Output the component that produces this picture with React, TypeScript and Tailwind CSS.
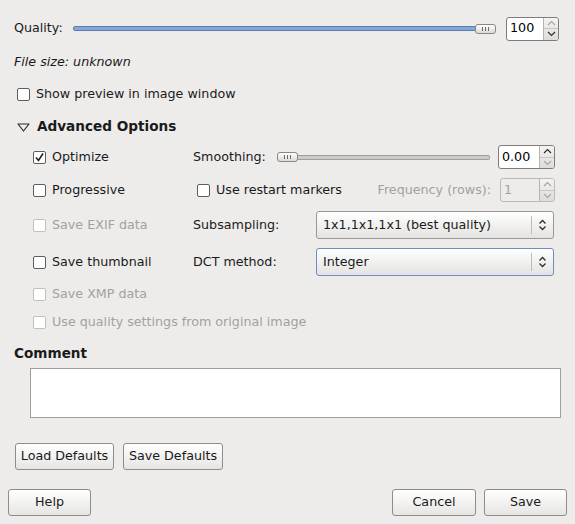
const font = { fontFamily: '"DejaVu Sans", "Liberation Sans", sans-serif' };

const Check = ({ checked = false, disabled = false }: { checked?: boolean; disabled?: boolean }) => (
  <span
    className={`flex h-[13px] w-[13px] items-center justify-center rounded-[2px] border bg-white ${
      disabled ? "border-[#c2c0bd] bg-[#efeeed]" : "border-[#5e5e5e]"
    }`}
  >
    {checked && (
      <svg width="11" height="11" viewBox="0 0 11 11">
        <path d="M2 5.5 L4.5 8.5 L9 1.5" fill="none" stroke="#222" strokeWidth="1.6" />
      </svg>
    )}
  </span>
);

const CheckRow = ({
  label,
  checked,
  disabled,
}: {
  label: string;
  checked?: boolean;
  disabled?: boolean;
}) => (
  <div className="flex items-center gap-[6px]">
    <Check checked={checked} disabled={disabled} />
    <span className={disabled ? "text-[#a3a19e]" : "text-[#1a1a1a]"}>{label}</span>
  </div>
);

const Thumb = () => (
  <div className="flex h-[10px] w-[21px] shrink-0 items-center justify-center gap-[2px] rounded-[3px] border border-[#8a8886] bg-gradient-to-b from-white to-[#dcdad7]">
    <span className="h-[4px] w-px bg-[#6d6b68]" />
    <span className="h-[4px] w-px bg-[#6d6b68]" />
    <span className="h-[4px] w-px bg-[#6d6b68]" />
  </div>
);

const Arrows = ({ upDim, downDim }: { upDim?: boolean; downDim?: boolean }) => (
  <div className="flex w-[15px] flex-col border-l border-[#b5b3b0] bg-gradient-to-b from-[#f4f3f2] to-[#dedcda]">
    <div className="flex flex-1 items-center justify-center border-b border-[#c9c7c4]">
      <svg width="9" height="6" viewBox="0 0 9 6">
        <path d="M1 5 L4.5 1.5 L8 5" fill="none" stroke={upDim ? "#a8a6a3" : "#2e2e2e"} strokeWidth="1.2" />
      </svg>
    </div>
    <div className="flex flex-1 items-center justify-center">
      <svg width="9" height="6" viewBox="0 0 9 6">
        <path d="M1 1 L4.5 4.5 L8 1" fill="none" stroke={downDim ? "#a8a6a3" : "#2e2e2e"} strokeWidth="1.2" />
      </svg>
    </div>
  </div>
);

const Spin = ({
  value,
  w,
  disabled,
  upDim,
  downDim,
}: {
  value: string;
  w: string;
  disabled?: boolean;
  upDim?: boolean;
  downDim?: boolean;
}) => (
  <div
    className={`flex h-[24px] ${w} shrink-0 overflow-hidden rounded-[3px] border ${
      disabled ? "border-[#bcbab7] bg-[#edeceb]" : "border-[#7f7d7a] bg-white"
    }`}
  >
    <div className={`flex flex-1 items-center pl-[3px] ${disabled ? "text-[#a3a19e]" : "text-black"}`}>{value}</div>
    <Arrows upDim={upDim || disabled} downDim={downDim || disabled} />
  </div>
);

const Combo = ({ value, focused }: { value: string; focused?: boolean }) => (
  <div
    className={`flex h-[28px] w-[238px] items-center rounded-[3px] border bg-gradient-to-b from-white to-[#e4e3e1] ${
      focused ? "border-[#6b8fc2]" : "border-[#9a9895]"
    }`}
  >
    <span className="flex-1 pl-[6px] text-[#1a1a1a]">{value}</span>
    <span className="h-[18px] w-px bg-[#bdbbb8]" />
    <span className="flex w-[21px] justify-center">
      <svg width="9" height="12" viewBox="0 0 9 12">
        <path d="M1.5 4.5 L4.5 1.5 L7.5 4.5 M1.5 7.5 L4.5 10.5 L7.5 7.5" fill="none" stroke="#2e2e2e" strokeWidth="1.3" />
      </svg>
    </span>
  </div>
);

const Button = ({ label, w }: { label: string; w: string }) => (
  <button className={`flex h-[27px] ${w} items-center justify-center rounded-[3px] border border-[#8f8d8a] bg-gradient-to-b from-white to-[#e6e5e3] text-[#1a1a1a]`}>
    {label}
  </button>
);

export default function App() {
  return (
    <div className="flex h-[524px] w-[575px] flex-col bg-[#edeceb] text-[12.7px] leading-none text-[#1a1a1a]" style={font}>
      {/* quality */}
      <div className="mt-[16px] flex h-[25px] items-center pl-[14px] pr-[16px]">
        <span className="w-[59px]">Quality:</span>
        <div className="flex flex-1 items-center">
          <div className="h-[5px] flex-1 rounded-[2px] border border-[#5a7fb5] bg-[#86a7d6]" />
          <div className="-ml-[20px]">
            <Thumb />
          </div>
        </div>
        <div className="ml-[10px]">
          <Spin value="100" w="w-[53px]" upDim />
        </div>
      </div>

      <div className="mt-[10px] flex h-[22px] items-center pl-[14px] italic">File size: unknown</div>

      <div className="mt-[10px] flex h-[22px] items-center pl-[17px]">
        <CheckRow label="Show preview in image window" />
      </div>

      {/* advanced expander */}
      <div className="mt-[11px] flex h-[22px] items-center gap-[7px] pl-[17px]">
        <svg width="13" height="9" viewBox="0 0 13 9">
          <path d="M1 1 L12 1 L6.5 8 Z" fill="none" stroke="#2a2a2a" strokeWidth="1.2" strokeLinejoin="round" />
        </svg>
        <span className="text-[13.6px] font-bold">Advanced Options</span>
      </div>

      <div className="mt-[7px] grid grid-cols-[160px_1fr] pl-[33px] pr-[20px]">
        <div className="flex h-[24px] items-center">
          <CheckRow label="Optimize" checked />
        </div>
        <div className="flex h-[24px] items-center">
          <span className="w-[84px]">Smoothing:</span>
          <div className="flex w-[213px] items-center">
            <Thumb />
            <div className="h-[5px] flex-1 rounded-r-[2px] border border-l-0 border-[#a09e9b] bg-[#cdcbc8]" />
          </div>
          <div className="ml-auto">
            <Spin value="0.00" w="w-[57px]" downDim />
          </div>
        </div>

        <div className="mt-[9px] flex h-[24px] items-center">
          <CheckRow label="Progressive" />
        </div>
        <div className="mt-[9px] flex h-[24px] items-center pl-[4px]">
          <CheckRow label="Use restart markers" />
          <span className="ml-auto mr-[9px] text-[#a3a19e]">Frequency (rows):</span>
          <Spin value="1" w="w-[55px]" disabled />
        </div>

        <div className="mt-[9px] flex h-[28px] items-center">
          <CheckRow label="Save EXIF data" disabled />
        </div>
        <div className="mt-[9px] flex h-[28px] items-center">
          <span className="w-[123px]">Subsampling:</span>
          <Combo value="1x1,1x1,1x1 (best quality)" />
        </div>

        <div className="mt-[9px] flex h-[28px] items-center">
          <CheckRow label="Save thumbnail" />
        </div>
        <div className="mt-[9px] flex h-[28px] items-center">
          <span className="w-[123px]">DCT method:</span>
          <Combo value="Integer" focused />
        </div>

        <div className="col-span-2 mt-[7px] flex h-[22px] items-center">
          <CheckRow label="Save XMP data" disabled />
        </div>
        <div className="col-span-2 mt-[6px] flex h-[22px] items-center">
          <CheckRow label="Use quality settings from original image" disabled />
        </div>
      </div>

      <div className="mt-[11px] flex h-[20px] items-center pl-[14px] text-[13.6px] font-bold">Comment</div>
      <div className="ml-[30px] mt-[4px] h-[50px] w-[531px] border border-[#a09e9b] bg-white" />

      <div className="ml-[15px] mt-[25px] flex gap-[9px]">
        <Button label="Load Defaults" w="w-[99px]" />
        <Button label="Save Defaults" w="w-[100px]" />
      </div>

      <div className="mt-[19px] flex gap-[8px] px-[8px]">
        <Button label="Help" w="w-[83px]" />
        <div className="flex-1" />
        <Button label="Cancel" w="w-[84px]" />
        <Button label="Save" w="w-[83px]" />
      </div>
    </div>
  );
}
